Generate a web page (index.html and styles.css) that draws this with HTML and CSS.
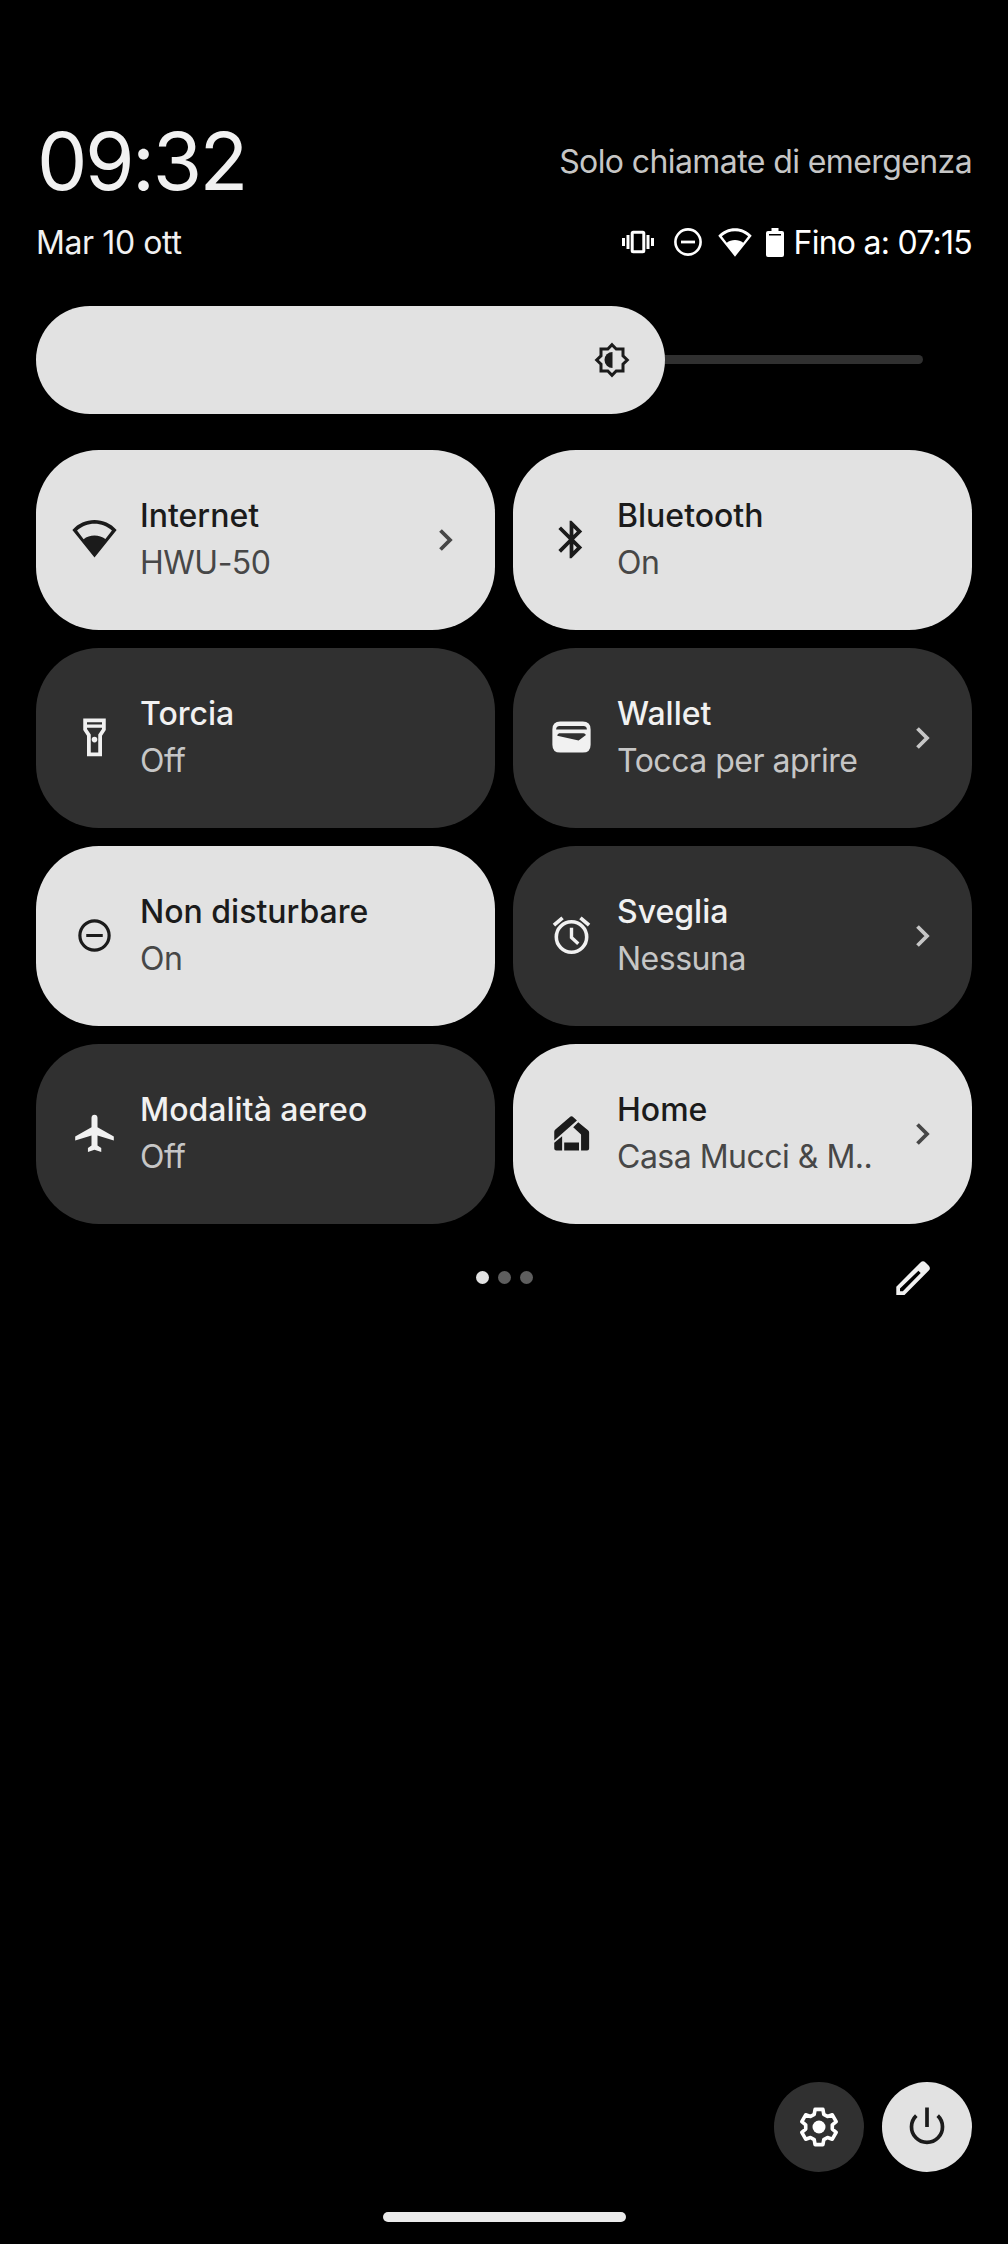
FILE: index.html
```
<!DOCTYPE html>
<html lang="it">
  <head>
    <meta charset="UTF-8" />
    <meta name="viewport" content="width=device-width, initial-scale=1.0" />
    <title>Quick Settings</title>
    <link rel="stylesheet" href="styles.css">
  </head>
  <body>
    <main class="panel">
      <header>
        <div class="row top">
          <h1 class="clock">09:32</h1>
          <span class="carrier">Solo chiamate di emergenza</span>
        </div>
        <div class="row status">
          <span class="date">Mar 10 ott</span>
          <div class="status-icons">
            <svg class="vibrate" viewBox="0 0 32 24">
              <rect x="10.2" y="2.2" width="11.6" height="19.6" rx="1" fill="none" stroke="currentColor" stroke-width="3" />
              <path d="M0 8h3v8H0zM4.5 5h3v14h-3zM24.500 5h3v14h-3zM29 8h3v8h-3z" fill="currentColor" />
            </svg>
            <svg class="dnd" viewBox="0 0 28 28">
              <circle cx="14" cy="14" r="12.6" fill="none" stroke="currentColor" stroke-width="2.6" />
              <path d="M7 14h14" stroke="currentColor" stroke-width="2.8" />
            </svg>
            <svg class="wifi" viewBox="0 1.600 24 20">
              <path fill="currentColor" fill-rule="evenodd" d="M.2 6.900C3.300 3.400 7.500 1.600 12 1.600s8.700 1.800 11.800 5.300L12 21.600zM2.700 7.200 6.200 11.800C7.800 10.600 9.800 9.900 12 9.900s4.200.7 5.800 1.900l3.500-4.600C18.800 4.900 15.500 3.600 12 3.600S5.200 4.900 2.700 7.200z" />
            </svg>
            <svg class="battery" viewBox="0 0 18 29">
              <path fill="currentColor" fill-rule="evenodd" d="M5.500 0h7v3H16q2 0 2 2v22q0 2-2 2H2q-2 0-2-2V5q0-2 2-2h3.500zM3 6v1.600h12V6z" />
            </svg>
            <span class="battery-text">Fino a: 07:15</span>
          </div>
        </div>
      </header>

      <div class="brightness">
        <div class="level">
          <svg viewBox="0 0 36 36">
            <path d="M18 2.700l4.200 4.300H29v6.800L33.300 18 29 22.200V29h-6.800L18 33.300 13.800 29H7v-6.800L2.700 18 7 13.800V7h6.800z" fill="none" stroke="currentColor" stroke-width="3" />
            <path d="M18.500 10a8 8 0 0 0 0 16z" fill="currentColor" />
          </svg>
        </div>
        <div class="track"></div>
      </div>

      <section class="tiles">
        <div class="tile on">
          <svg class="icon" viewBox="0 0 24 24">
            <path fill="currentColor" fill-rule="evenodd" d="M.2 6.900C3.300 3.400 7.500 1.600 12 1.600s8.700 1.800 11.800 5.300L12 21.600zM2.700 7.200 6.200 11.800C7.800 10.600 9.800 9.900 12 9.900s4.200.7 5.800 1.900l3.500-4.600C18.800 4.900 15.500 3.600 12 3.600S5.200 4.900 2.700 7.200z" />
          </svg>
          <div class="label">
            <p class="title">Internet</p>
            <p class="sub">HWU-50</p>
          </div>
          <svg class="chevron" viewBox="0 0 14 22"><path d="M1.500 1.500 11 11l-9.500 9.500" /></svg>
        </div>

        <div class="tile on">
          <svg class="icon" viewBox="0 0 24 24">
            <path fill="currentColor" d="M17.710 7.710L12 2h-1v7.590L6.410 5 5 6.410 10.590 12 5 17.590 6.410 19 11 14.410V22h1l5.710-5.710-4.300-4.290 4.300-4.290zM13 5.830l1.880 1.880L13 9.590V5.830zm1.880 10.460L13 18.170v-3.760l1.880 1.880z" />
          </svg>
          <div class="label">
            <p class="title">Bluetooth</p>
            <p class="sub">On</p>
          </div>
        </div>

        <div class="tile">
          <svg class="icon" viewBox="0 0 24 24">
            <path fill="currentColor" fill-rule="evenodd" d="M6 1.800h12v6.200l-2 3v11H8V11L6 8zM8 3.900v1.200h8V3.900zM8 6.800v.6l2 3V20h4v-9.600l2-3v-.6z" />
            <circle cx="12" cy="13.100" r="1.500" fill="currentColor" />
          </svg>
          <div class="label">
            <p class="title">Torcia</p>
            <p class="sub">Off</p>
          </div>
        </div>

        <div class="tile">
          <svg class="icon" viewBox="0 0 24 24">
            <path fill="currentColor" fill-rule="evenodd" d="M6 3.500h12q4.200 0 4.200 4.200v8.100q0 4.200-4.200 4.200H6q-4.200 0-4.200-4.200V7.700Q1.800 3.500 6 3.500zM5.600 5.800q-1.800 0-1.800 1.900h16.400q0-1.900-1.800-1.900zM5.400 9.700q-1 .3-1 1.300l11.400 2.600L19.700 10.700q-.4-1-1.300-1z" />
          </svg>
          <div class="label">
            <p class="title">Wallet</p>
            <p class="sub">Tocca per aprire</p>
          </div>
          <svg class="chevron" viewBox="0 0 14 22"><path d="M1.500 1.500 11 11l-9.500 9.500" /></svg>
        </div>

        <div class="tile on">
          <svg class="icon" viewBox="0 0 24 24">
            <circle cx="12" cy="12" r="7.800" fill="none" stroke="currentColor" stroke-width="1.700" />
            <path d="M7.600 12h8.800" stroke="currentColor" stroke-width="1.600" />
          </svg>
          <div class="label">
            <p class="title">Non disturbare</p>
            <p class="sub">On</p>
          </div>
        </div>

        <div class="tile">
          <svg class="icon" viewBox="0 0 24 24">
            <path fill="currentColor" d="M22 5.720l-4.600-3.860-1.290 1.530 4.600 3.860zM7.880 3.390L6.600 1.860 2 5.710l1.290 1.530z" />
            <circle cx="12" cy="12.800" r="8.100" fill="none" stroke="currentColor" stroke-width="1.900" />
            <path d="M12 7.800v5.300l3.600 3.300" fill="none" stroke="currentColor" stroke-width="1.800" />
          </svg>
          <div class="label">
            <p class="title">Sveglia</p>
            <p class="sub">Nessuna</p>
          </div>
          <svg class="chevron" viewBox="0 0 14 22"><path d="M1.500 1.500 11 11l-9.500 9.500" /></svg>
        </div>

        <div class="tile">
          <svg class="icon" viewBox="0 0 24 24">
            <path fill="currentColor" d="M12 2q1.500.1 1.600 1.600v5l8.700 5v2.100l-8.700-2.600v5.300l2 1.300v2.100L12 20.700l-3.500 1.100v-2.100l1.900-1.300v-5.300l-8.700 2.600v-2.100l8.700-5v-5Q10.500 2.100 12 2z" />
          </svg>
          <div class="label">
            <p class="title">Modalità aereo</p>
            <p class="sub">Off</p>
          </div>
        </div>

        <div class="tile on">
          <svg class="icon" viewBox="0 0 24 24">
            <path fill="currentColor" d="M2.800 11q0-.7.600-1.200L11 3.300q1-.9 2 0l1.900 1.800L2.800 15.700zM15.600 6l5.200 4.300q.6.500.6 1.200V20q0 1.100-1.100 1.100h-3.200v-8.600l-4.200-3.900zM8.100 16.800H16v4.300H8.100zM2.800 16.900 7 13.500v7.600H3.900q-1.100 0-1.100-1.100z" />
          </svg>
          <div class="label">
            <p class="title">Home</p>
            <p class="sub">Casa Mucci &amp; M..</p>
          </div>
          <svg class="chevron" viewBox="0 0 14 22"><path d="M1.500 1.500 11 11l-9.500 9.500" /></svg>
        </div>
      </section>

      <div class="pager">
        <div class="dots">
          <span class="dot active"></span>
          <span class="dot"></span>
          <span class="dot"></span>
        </div>
        <svg class="edit" viewBox="0 0 34 34">
          <path fill="currentColor" fill-rule="evenodd" d="M.3 34v-8.300L24.500 1.400q2.500-2.200 5 0L32.800 4.700q2.200 2.500 0 4.700L8.500 34zM4 30.300h2.800L24.700 12 22.400 9.700 4 27.500z" />
        </svg>
      </div>

      <footer>
        <button class="round settings">
          <svg viewBox="-20 -20 40 40">
            <path d="M-3.900-17.600h7.800l.9 5 3.700 2.100 4.800-1.700 3.900 6.800-3.900 3.300v4.200l3.900 3.300-3.900 6.800-4.800-1.700-3.700 2.100-.9 5h-7.800l-.9-5-3.700-2.100-4.800 1.700-3.900-6.800 3.900-3.300v-4.200l-3.900-3.300 3.900-6.800 4.800 1.700 3.700-2.100z" fill="none" stroke="currentColor" stroke-width="3.600" stroke-linejoin="round" />
            <circle r="6.500" fill="currentColor" />
          </svg>
        </button>
        <button class="round power">
          <svg viewBox="-20 -20 40 40">
            <path d="M0-19.500V0M-10.700-11.300a15.500 15.500 0 1 0 21.400 0" fill="none" stroke="currentColor" stroke-width="3.700" />
          </svg>
        </button>
      </footer>
      <div class="nav-handle"></div>
    </main>
  </body>
</html>
```
FILE: styles.css
```
body {
  background-color: #000;
  margin: 0;
  font-family: Inter, Roboto, sans-serif;
  font-size: 32px;
  color: #f1f1f1;
}

h1,
p {
  margin: 0;
}

svg {
  display: block;
  flex-shrink: 0;
}

.panel {
  box-sizing: border-box;
  width: 1008px;
  height: 2244px;
  padding: 112px 36px 22px;
  display: flex;
  flex-direction: column;
}

.row {
  display: flex;
  justify-content: space-between;
  align-items: center;
}

.top {
  height: 98px;
}

.clock {
  margin: 0 0 2px 1px;
  font-size: 80px;
  font-weight: 400;
  letter-spacing: -2.5px;
}

.carrier {
  color: #c6c6c6;
  letter-spacing: -0.6px;
}

.status {
  height: 64px;
}

.date {
  letter-spacing: -0.4px;
}

.status-icons {
  display: flex;
  align-items: center;
  color: #fff;
}

.battery-text {
  letter-spacing: -0.75px;
}

.vibrate {
  width: 32px;
  height: 24px;
  margin-right: 20px;
}

.dnd {
  width: 28px;
  height: 28px;
  margin-right: 16px;
}

.wifi {
  width: 34px;
  height: 29px;
  margin-right: 14px;
}

.battery {
  width: 18px;
  height: 29px;
  margin-right: 10px;
}

.brightness {
  display: flex;
  align-items: center;
  height: 108px;
  margin-top: 32px;
}

.level {
  box-sizing: border-box;
  width: 629px;
  height: 108px;
  padding-right: 35px;
  border-radius: 54px;
  background-color: #e2e2e2;
  color: #1b1b1b;
  display: flex;
  align-items: center;
  justify-content: flex-end;
}

.level svg {
  width: 36px;
  height: 36px;
}

.track {
  width: 258px;
  height: 9px;
  margin-bottom: 1px;
  border-radius: 0 5px 5px 0;
  background-color: #303030;
}

.tiles {
  display: grid;
  grid-template-columns: 1fr 1fr;
  grid-auto-rows: 180px;
  gap: 18px;
  margin-top: 36px;
}

.tile {
  display: flex;
  align-items: center;
  padding: 0 42px 1px 36px;
  border-radius: 63px;
  background-color: #303030;
}

.tile.on {
  background-color: #e2e2e2;
  color: #1b1b1b;
}

.icon {
  width: 45px;
  height: 45px;
}

.label {
  flex: 1;
  margin: 0 0 1px 23px;
  line-height: 47px;
  white-space: nowrap;
}

.title {
  font-weight: 500;
}

.sub {
  letter-spacing: -0.5px;
}

.sub,
.chevron {
  color: #c6c6c6;
}

.on .sub,
.on .chevron {
  color: #474747;
}

.chevron {
  width: 14px;
  height: 22px;
  fill: none;
  stroke: currentColor;
  stroke-width: 3.8;
}

.pager {
  display: grid;
  grid-template-columns: 1fr auto 1fr;
  align-items: center;
  height: 107px;
}

.dots {
  grid-column: 2;
  display: flex;
  gap: 9px;
}

.dot {
  width: 13px;
  height: 13px;
  border-radius: 50%;
  background-color: #5e5e5e;
}

.dot.active {
  background-color: #e2e2e2;
}

.edit {
  width: 34px;
  height: 34px;
  justify-self: end;
  margin-right: 42px;
}

footer {
  display: flex;
  justify-content: flex-end;
  gap: 18px;
  margin-top: auto;
}

.round {
  width: 90px;
  height: 90px;
  padding: 0;
  border: none;
  border-radius: 50%;
  display: flex;
  align-items: center;
  justify-content: center;
}

.round svg {
  width: 40px;
  height: 40px;
}

.settings {
  background-color: #303030;
  color: #fff;
}

.power {
  background-color: #e2e2e2;
  color: #1b1b1b;
}

.nav-handle {
  align-self: center;
  width: 243px;
  height: 10px;
  margin-top: 40px;
  border-radius: 5px;
  background-color: #ebebeb;
}
```
